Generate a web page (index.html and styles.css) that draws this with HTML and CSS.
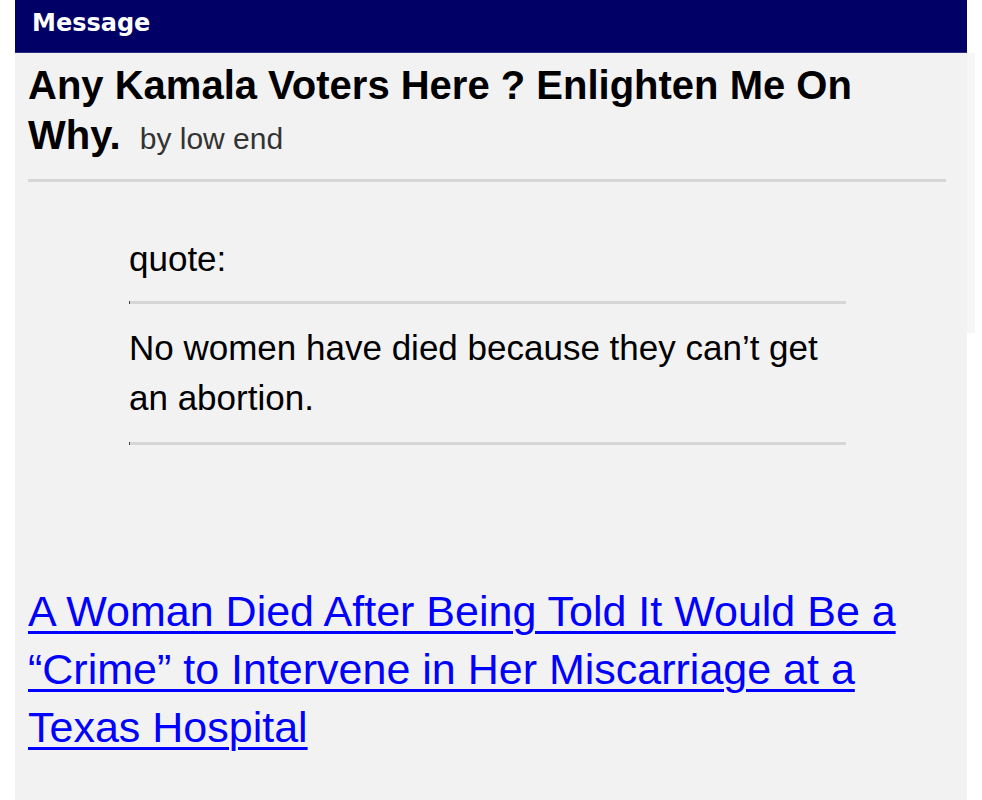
FILE: index.html
```html
<!DOCTYPE html>
<html>
<head>
<meta charset="utf-8">
<link rel="stylesheet" href="styles.css">
</head>
<body>
<div class="page">
  <div class="header">Message</div>
  <div class="panel">
    <h1 class="title">Any Kamala Voters Here ? Enlighten Me On Why. <span class="by">by low end</span></h1>
    <div class="sep"></div>
    <div class="quote">
      <div class="qlabel">quote:</div>
      <div class="qline"></div>
      <div class="qtext">No women have died because they can’t get an abortion.</div>
      <div class="qline"></div>
    </div>
    <a class="link" href="#">A Woman Died After Being Told It Would Be a “Crime” to Intervene in Her Miscarriage at a Texas Hospital</a>
  </div>
  <div class="edge"></div>
</div>
</body>
</html>
```

FILE: styles.css
```css
html, body {
  margin: 0;
  padding: 0;
  background: #ffffff;
}
.page {
  position: relative;
  margin-left: 15px;
  width: 952px;
  height: 800px;
  display: flex;
  flex-direction: column;
}
.header {
  background: #000066;
  color: #ffffff;
  font-family: "DejaVu Sans", Verdana, sans-serif;
  font-weight: bold;
  font-size: 24px;
  line-height: 46px;
  padding-left: 17px;
  border-bottom: 1px solid #2a2a80;
  box-sizing: border-box;
  height: 53px;
}
.panel {
  flex: 1;
  background: #f2f2f2;
  padding: 0 21px 0 13px;
  font-family: "Liberation Sans", Arial, sans-serif;
  color: #000;
}
.title {
  margin: 7px 0 0 0;
  font-size: 40px;
  line-height: 50px;
  font-weight: bold;
}
.by {
  font-weight: normal;
  font-size: 30px;
  line-height: 1;
  color: #333;
  margin-left: 8px;
}
.sep {
  margin-top: 19px;
  height: 3px;
  background: #d6d6d6;
}
.quote {
  margin: 0 100px 0 101px;
}
.qlabel {
  margin-top: 52px;
  font-size: 35px;
  line-height: 50px;
}
.qline {
  height: 3px;
  background: #d6d6d6;
  border-left: 1px solid #444;
  margin-top: 17px;
}
.qtext {
  margin-top: 19px;
  font-size: 35px;
  line-height: 50px;
}
.qtext + .qline {
  margin-top: 19px;
}
.link {
  display: block;
  margin-top: 137px;
  font-size: 43px;
  line-height: 58px;
  color: #0000ff;
  text-decoration: underline;
  text-decoration-thickness: 3px;
  text-underline-offset: 5px;
}
.edge {
  position: absolute;
  left: 952px;
  top: 53px;
  width: 8px;
  height: 280px;
  background: #f6f6f6;
}
```
